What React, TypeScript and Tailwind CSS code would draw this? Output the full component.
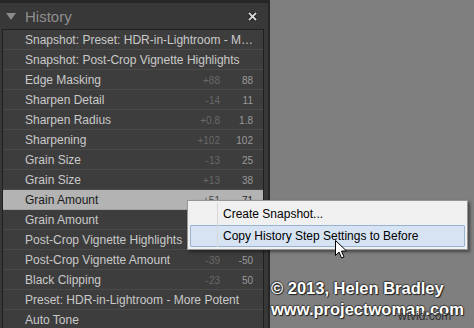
import React from 'react';

type Step = { label: string; delta?: string; value?: string; selected?: boolean };

const steps: Step[] = [
  { label: 'Snapshot: Preset: HDR-in-Lightroom - More Potent' },
  { label: 'Snapshot: Post-Crop Vignette Highlights' },
  { label: 'Edge Masking', delta: '+88', value: '88' },
  { label: 'Sharpen Detail', delta: '-14', value: '11' },
  { label: 'Sharpen Radius', delta: '+0.8', value: '1.8' },
  { label: 'Sharpening', delta: '+102', value: '102' },
  { label: 'Grain Size', delta: '-13', value: '25' },
  { label: 'Grain Size', delta: '+13', value: '38' },
  { label: 'Grain Amount', delta: '+51', value: '71', selected: true },
  { label: 'Grain Amount' },
  { label: 'Post-Crop Vignette Highlights' },
  { label: 'Post-Crop Vignette Amount', delta: '-39', value: '-50' },
  { label: 'Black Clipping', delta: '-23', value: '50' },
  { label: 'Preset: HDR-in-Lightroom - More Potent' },
  { label: 'Auto Tone' },
];

const ui = { fontFamily: '"Liberation Sans", Arial, sans-serif' };
const mark = { fontFamily: '"Liberation Sans", Arial, sans-serif', textShadow: '1px 1px 1px #1e1e1e, -1px 0 1px #3a3a3a, 0 -1px 1px #3a3a3a' };

const HistoryRow: React.FC<{ step: Step }> = ({ step }) => (
  <div
    className={`h-[20px] shrink-0 flex items-center pl-[22px] pr-[10px] border-b ${
      step.selected ? 'bg-[#b3b3b3] border-[#a3a3a3] text-[#1c1c1c]' : 'bg-[#3d3d3d] border-[#4a4a4a] text-[#c9c9c9]'
    }`}
  >
    <span className="flex-1 truncate text-[12px] leading-[14px] pt-[1px] pr-[2px] -mr-[6px]">{step.label}</span>
    {step.delta && (
      <>
        <span className={`w-[46px] text-right text-[10px] pt-[1px] ${step.selected ? 'text-[#4a4a4a]' : 'text-[#686868]'}`}>{step.delta}</span>
        <span className={`w-[33px] text-right text-[10px] pt-[1px] ${step.selected ? 'text-[#2a2a2a]' : 'text-[#9a9a9a]'}`}>{step.value}</span>
      </>
    )}
  </div>
);

export default function App() {
  return (
    <div className="relative w-[474px] h-[328px] overflow-hidden flex bg-[#7f7f7f]" style={ui}>
      {/* history panel */}
      <div className="w-[270px] h-full flex flex-col bg-[#383838] border-r-2 border-[#262626]">
        <div className="h-[3px] bg-[#272727] shrink-0" />
        <div className="h-[26px] shrink-0 flex items-center pl-[6px] pr-[11px]">
          <svg width="10" height="7" viewBox="0 0 10 7" className="mt-[1px]">
            <polygon points="0,0 10,0 5,7" fill="#8a8a8a" />
          </svg>
          <span className="ml-[9px] text-[15px] leading-none text-[#8f8f8f]">History</span>
          <svg width="9" height="9" viewBox="0 0 9 9" className="ml-auto">
            <path d="M1.5 1.5 L7.5 7.5 M7.5 1.5 L1.5 7.5" stroke="#1a1a1a" strokeWidth="3.6" strokeLinecap="square" />
            <path d="M1.5 1.5 L7.5 7.5 M7.5 1.5 L1.5 7.5" stroke="#d8d8d8" strokeWidth="1.8" strokeLinecap="square" />
          </svg>
        </div>
        <div className="ml-[2px] mr-[4px] flex-1 flex flex-col border-l border-t border-r border-[#202020] overflow-hidden">
          {steps.map((s, i) => (
            <HistoryRow key={i} step={s} />
          ))}
        </div>
      </div>

      {/* watermark */}
      <div className="flex-1 flex flex-col justify-end pl-[1px] pb-[8px] relative">
        <div className="text-[16.5px] font-bold leading-[21px] text-white" style={mark}>
          © 2013, Helen Bradley
        </div>
        <div className="text-[16.5px] font-bold leading-[21px] text-white" style={mark}>
          www.projectwoman.com
        </div>
        <div className="absolute left-[128px] bottom-[5px] text-[12px] leading-[14px] text-[#333]">
          wtvid.com
        </div>
      </div>

      {/* context menu */}
      <div className="absolute left-[187px] top-[200px] w-[281px] h-[50px] bg-[#f0f0f0] border border-[#979797] shadow-[2px_2px_3px_rgba(0,0,0,0.45)] p-[2px] flex flex-col text-[12px] text-black">
        <div className="absolute left-[29px] top-[2px] bottom-[2px] w-px bg-[#d7d7d7]" />
        <div className="h-[22px] flex items-center pl-[33px]">Create Snapshot...</div>
        <div className="h-[22px] flex items-center pl-[32px] bg-[#d5e3f3] border border-[#99b4d1] rounded-[1px]">Copy History Step Settings to Before</div>
      </div>

      {/* cursor */}
      <svg className="absolute left-[335px] top-[240px]" width="13" height="20" viewBox="0 0 13 20">
        <path d="M0.5 0.5 L0.5 15.5 L4 12 L6.5 18 L9 17 L6.5 11 L11.5 11 Z" fill="white" stroke="black" strokeWidth="1" strokeLinejoin="round" />
      </svg>
    </div>
  );
}
